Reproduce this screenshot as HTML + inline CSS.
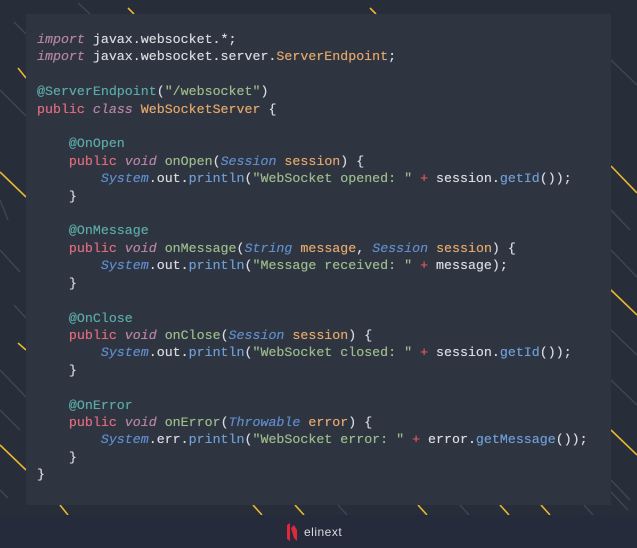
<!DOCTYPE html>
<html><head><meta charset="utf-8"><style>
html,body{margin:0;padding:0}
body{width:637px;height:548px;background:#272d39;position:relative;overflow:hidden;font-family:"Liberation Mono",monospace}
svg.bg{position:absolute;left:0;top:0}
.panel{position:absolute;left:26px;top:14px;width:585px;height:491px;background:#2f3540}
.footer{position:absolute;left:0;top:515px;width:637px;height:33px;background:#252b3a}
pre{position:absolute;left:37px;top:31px;margin:0;font-size:13.3px;line-height:17.4px;color:#d6dae0;font-family:"Liberation Mono",monospace;text-shadow:0 0 0.4px currentColor}
.k{color:#de6b7d}.i{color:#b683a6;font-style:italic}.a{color:#5aa9a6}.c{color:#e3a66c}
.t{color:#5f8ccc;font-style:italic}.s{color:#9bbb8c}.m{color:#6d9dd6}.p{color:#e05a5a}.o{color:#e3a66c}
.logo{position:absolute;font-family:"Liberation Sans",sans-serif;font-size:12px;color:#d8dce2;letter-spacing:0.5px}
</style></head><body>
<svg class="bg" width="637" height="548">
<g stroke="#e8b830" stroke-width="1.6">
<line x1="18" y1="68" x2="26" y2="78"/><line x1="0" y1="172" x2="26" y2="197"/><line x1="18" y1="343" x2="26" y2="350"/>
<line x1="0" y1="445" x2="26" y2="470"/><line x1="611" y1="166" x2="637" y2="193"/><line x1="611" y1="290" x2="637" y2="315"/>
<line x1="611" y1="430" x2="637" y2="455"/><line x1="128" y1="8" x2="134" y2="14"/><line x1="370" y1="8" x2="376" y2="14"/>
<line x1="253" y1="505" x2="262" y2="515"/><line x1="295" y1="505" x2="304" y2="515"/><line x1="418" y1="505" x2="427" y2="515"/>
<line x1="500" y1="505" x2="509" y2="515"/><line x1="541" y1="505" x2="550" y2="515"/><line x1="60" y1="505" x2="68" y2="515"/>
</g>
<g stroke="#3e4758" stroke-width="1.4">
<line x1="78" y1="3" x2="90" y2="14"/><line x1="14" y1="22" x2="26" y2="34"/><line x1="0" y1="90" x2="26" y2="116"/>
<line x1="0" y1="200" x2="8" y2="220"/><line x1="0" y1="250" x2="20" y2="272"/><line x1="14" y1="305" x2="26" y2="318"/>
<line x1="0" y1="370" x2="26" y2="397"/><line x1="0" y1="410" x2="20" y2="430"/><line x1="0" y1="490" x2="8" y2="498"/>
<line x1="611" y1="210" x2="630" y2="230"/><line x1="611" y1="250" x2="637" y2="277"/><line x1="611" y1="330" x2="637" y2="355"/>
<line x1="611" y1="380" x2="637" y2="405"/><line x1="611" y1="480" x2="630" y2="500"/><line x1="611" y1="60" x2="637" y2="85"/>
<line x1="338" y1="505" x2="347" y2="515"/><line x1="460" y1="505" x2="469" y2="515"/><line x1="584" y1="505" x2="593" y2="515"/><line x1="611" y1="492" x2="628" y2="510"/>
</g>
</svg>
<div class="panel"></div>
<div class="footer"></div>
<pre><span class="i">import</span> javax.websocket.*;
<span class="i">import</span> javax.websocket.server.<span class="c">ServerEndpoint</span>;

<span class="a">@ServerEndpoint</span>(<span class="s">"/websocket"</span>)
<span class="k">public</span> <span class="i">class</span> <span class="c">WebSocketServer</span> {

    <span class="a">@OnOpen</span>
    <span class="k">public</span> <span class="i">void</span> <span class="s">onOpen</span>(<span class="t">Session</span> <span class="o">session</span>) {
        <span class="t">System</span>.out.<span class="m">println</span>(<span class="s">"WebSocket opened: "</span> <span class="p">+</span> session.<span class="m">getId</span>());
    }

    <span class="a">@OnMessage</span>
    <span class="k">public</span> <span class="i">void</span> <span class="s">onMessage</span>(<span class="t">String</span> <span class="o">message</span>, <span class="t">Session</span> <span class="o">session</span>) {
        <span class="t">System</span>.out.<span class="m">println</span>(<span class="s">"Message received: "</span> <span class="p">+</span> message);
    }

    <span class="a">@OnClose</span>
    <span class="k">public</span> <span class="i">void</span> <span class="s">onClose</span>(<span class="t">Session</span> <span class="o">session</span>) {
        <span class="t">System</span>.out.<span class="m">println</span>(<span class="s">"WebSocket closed: "</span> <span class="p">+</span> session.<span class="m">getId</span>());
    }

    <span class="a">@OnError</span>
    <span class="k">public</span> <span class="i">void</span> <span class="s">onError</span>(<span class="t">Throwable</span> <span class="o">error</span>) {
        <span class="t">System</span>.err.<span class="m">println</span>(<span class="s">"WebSocket error: "</span> <span class="p">+</span> error.<span class="m">getMessage</span>());
    }
}</pre>
<svg style="position:absolute;left:286px;top:522px" width="12" height="20"><path d="M1 3 L4 1 L4 19 L1 17 Z M5 6 L8 3 L11 8 L11 19 L8 16 Z" fill="#e0283c"/></svg>
<div class="logo" style="left:304px;top:525px">elinext</div>
</body></html>
